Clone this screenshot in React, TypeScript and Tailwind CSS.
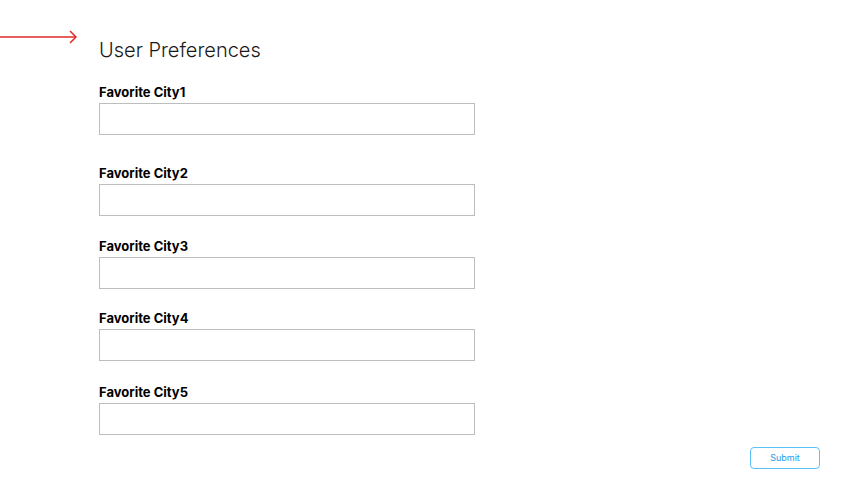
import React from 'react';

const FIELDS = [
  { id: 'city1', label: 'Favorite City1', gap: 'mt-[20px]' },
  { id: 'city2', label: 'Favorite City2', gap: 'mt-[30px]' },
  { id: 'city3', label: 'Favorite City3', gap: 'mt-[22px]' },
  { id: 'city4', label: 'Favorite City4', gap: 'mt-[21px]' },
  { id: 'city5', label: 'Favorite City5', gap: 'mt-[23px]' },
];

const Arrow: React.FC = () => (
  <svg width="78" height="14" viewBox="0 0 78 14" className="mt-[30px] shrink-0">
    <line x1="0" y1="7" x2="76" y2="7" stroke="#e02a2a" strokeWidth="1.5" />
    <polyline points="70,1 76,7 70,13" fill="none" stroke="#e02a2a" strokeWidth="1.5" />
  </svg>
);

export default function App() {
  return (
    <div className="w-full h-[499px] bg-white text-[#111] font-['Inter',sans-serif] flex flex-col">
      <div className="flex">
        <Arrow />
        <div className="ml-[21px] pt-[36px] w-[376px] flex flex-col">
          <h1 className="text-[20px] leading-[28px] font-light text-[#1a1a1a]">User Preferences</h1>

          {FIELDS.map((field) => (
            <div key={field.id} className={`${field.gap} flex flex-col`}>
              <label htmlFor={field.id} className="text-[13px] leading-[16px] font-bold text-black">
                {field.label}
              </label>
              <input
                id={field.id}
                type="text"
                className="mt-[3px] h-[32px] w-full border border-[#bdbdbd] bg-white outline-none"
              />
            </div>
          ))}
        </div>
      </div>

      <div className="flex justify-end pr-[29px] mt-[12px]">
        <button className="w-[70px] h-[22px] rounded-[4px] border border-[#5cc2fa] text-[9px] text-[#1e9bf0] bg-white">
          Submit
        </button>
      </div>
    </div>
  );
}
